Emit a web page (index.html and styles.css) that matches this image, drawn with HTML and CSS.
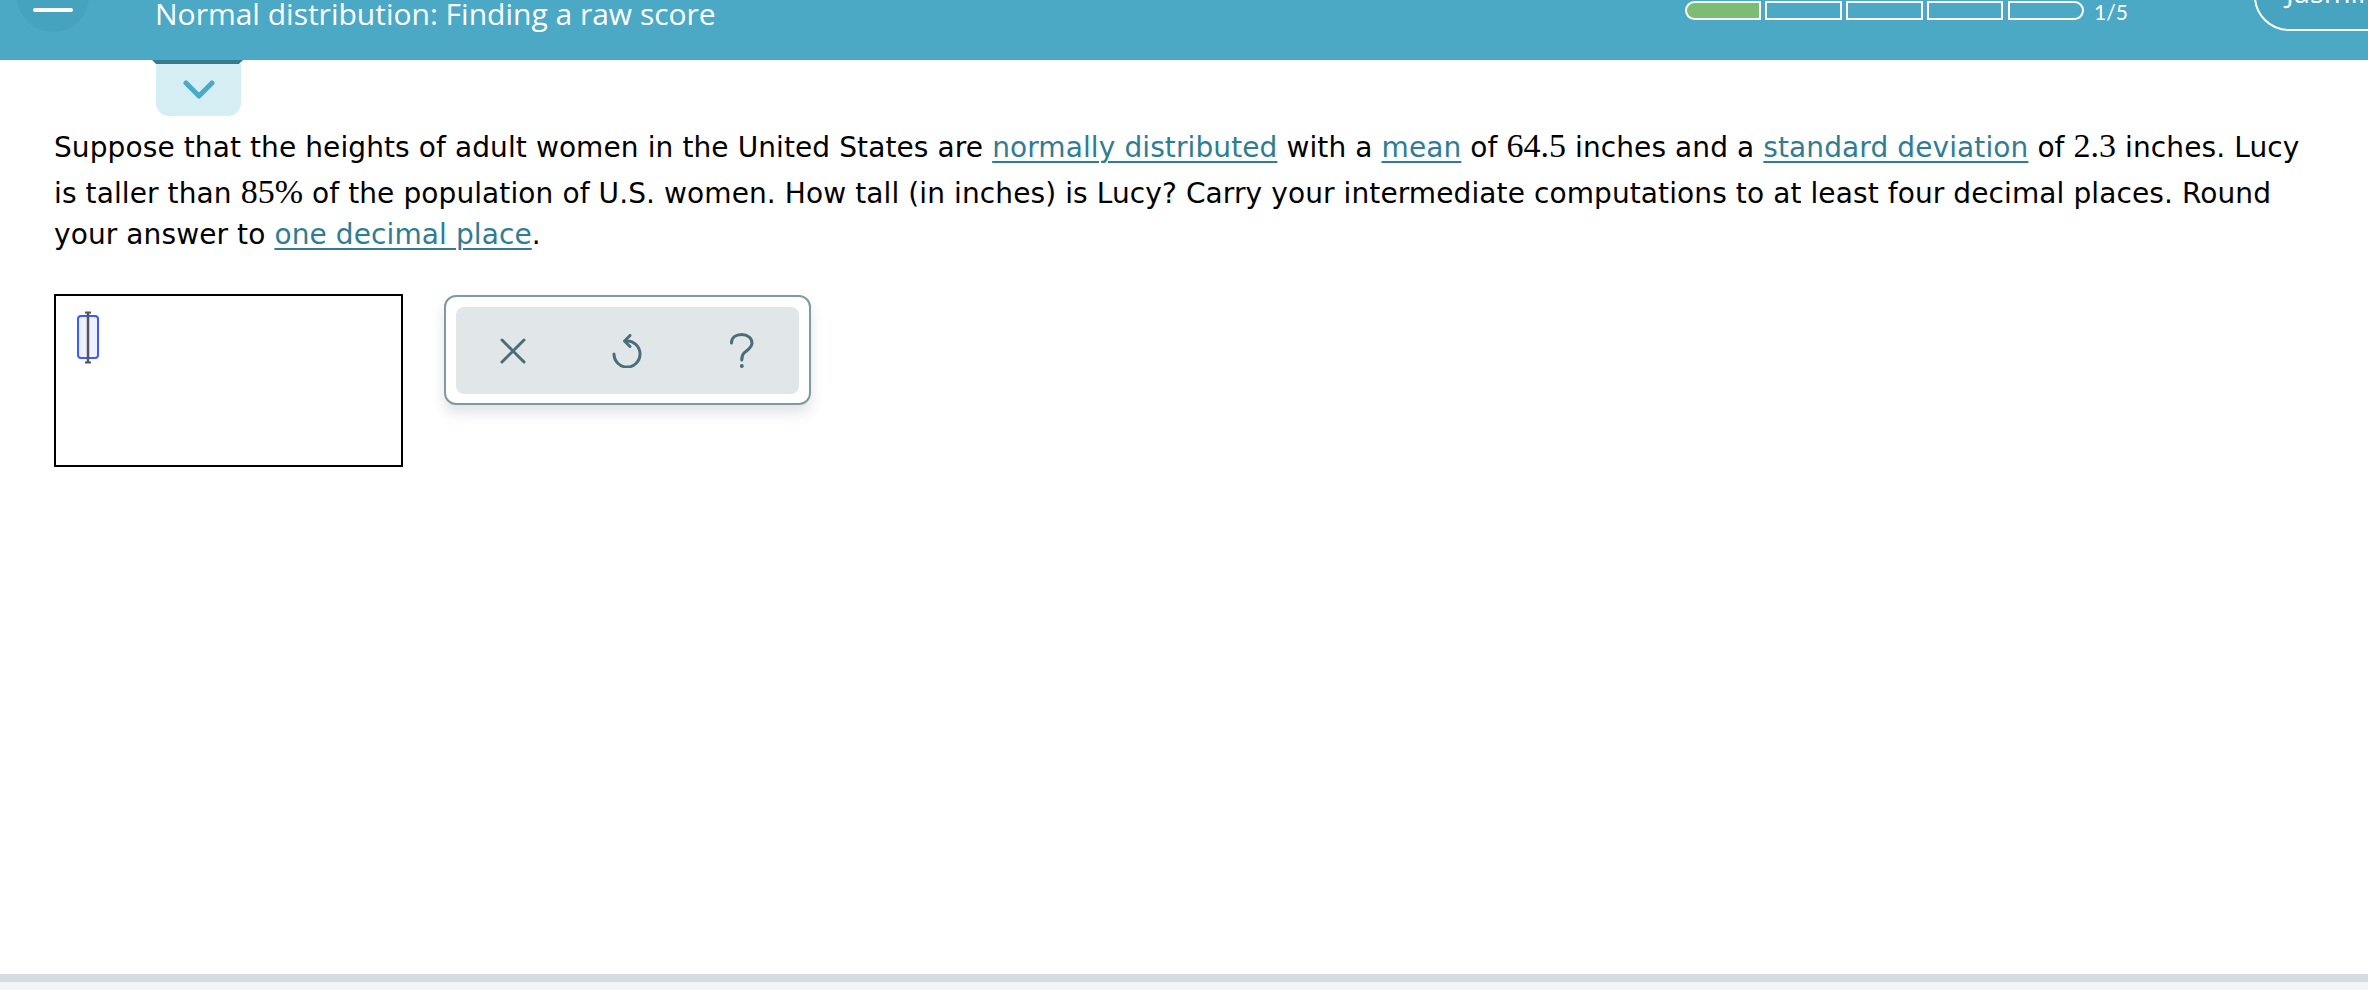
FILE: index.html
```html
<!DOCTYPE html>
<html lang="en">
<head>
<meta charset="utf-8">
<title>Normal distribution: Finding a raw score</title>
<link rel="stylesheet" href="styles.css">
</head>
<body>
<div class="page">
  <header class="topbar">
    <div class="menu-btn"><span class="menu-line"></span></div>
    <div class="title">Normal distribution: Finding a raw score</div>
    <div class="progress">
      <span class="seg seg-first seg-done"></span>
      <span class="seg"></span>
      <span class="seg"></span>
      <span class="seg"></span>
      <span class="seg seg-last"></span>
    </div>
    <div class="count">1/5</div>
    <div class="account">Jasmine</div>
  </header>

  <div class="tab">
    <div class="tab-edge"></div>
    <div class="tab-body">
      <svg class="chev" width="32" height="20" viewBox="0 0 32 20"><path d="M3 3 L16 16 L29 3" fill="none" stroke="#4aa9c6" stroke-width="5" stroke-linecap="round" stroke-linejoin="round"/></svg>
    </div>
  </div>

  <main class="content">
    <p class="problem">Suppose that the heights of adult women in the United States are <a class="link">normally distributed</a> with a <a class="link">mean</a> of <span class="math">64.5</span> inches and a <a class="link">standard deviation</a> of <span class="math">2.3</span> inches. Lucy is taller than <span class="math">85%</span> of the population of U.S. women. How tall (in inches) is Lucy? Carry your intermediate computations to at least four decimal places. Round your answer to <a class="link">one decimal place</a>.</p>

    <div class="answer-row">
      <div class="answer-box">
        <svg class="cursor" width="26" height="54" viewBox="0 0 26 54">
          <rect x="3" y="5" width="20" height="42" rx="3" fill="#eef0ff" stroke="#3d5afe" stroke-width="2"/>
          <path d="M13 2 V51" stroke="#555" stroke-width="2.5"/>
          <path d="M10 1.5 H16 M10 51.5 H16" stroke="#555" stroke-width="1.8"/>
        </svg>
      </div>
      <div class="toolbar">
        <div class="tools">
          <div class="tool">
            <svg width="26" height="26" viewBox="0 0 26 26"><path d="M2 2 L24 24 M24 2 L2 24" stroke="#4a6e79" stroke-width="3" stroke-linecap="round"/></svg>
          </div>
          <div class="tool">
            <svg width="32" height="34" viewBox="0 0 32 34"><path d="M16 7 A13 13 0 1 1 3 20" fill="none" stroke="#4a6e79" stroke-width="3" stroke-linecap="round"/><path d="M19 1.5 L13.5 7 L19 12.5" fill="none" stroke="#4a6e79" stroke-width="3" stroke-linecap="round" stroke-linejoin="round"/></svg>
          </div>
          <div class="tool">
            <svg width="26" height="36" viewBox="0 0 26 36"><path d="M2.5 10 C2.5 4.5 7 1.5 12.5 1.5 C18.5 1.5 23 5 23 10 C23 15 18 17 15 20 C13.3 21.7 12.8 23.5 12.8 27" fill="none" stroke="#4a6e79" stroke-width="3" stroke-linecap="round"/><circle cx="12.8" cy="33" r="2" fill="#4a6e79"/></svg>
          </div>
        </div>
      </div>
    </div>
  </main>

  <footer class="bottom-band"></footer>
</div>
</body>
</html>
```

FILE: styles.css
```css
html, body {
  margin: 0;
  padding: 0;
  background: #ffffff;
}

.page {
  width: 2368px;
  height: 990px;
  overflow: hidden;
  display: flex;
  flex-direction: column;
  font-family: "DejaVu Sans", Verdana, sans-serif;
  color: #000;
}

.topbar {
  height: 60px;
  flex-shrink: 0;
  background: #4ba9c6;
  display: flex;
  align-items: flex-start;
  padding-left: 17px;
  overflow: hidden;
  font-family: "Open Sans", Lato, sans-serif;
  color: #fff;
}

.menu-btn {
  width: 72px;
  height: 72px;
  margin-top: -40px;
  border-radius: 50%;
  background: #45a3c0;
  flex-shrink: 0;
  display: flex;
  justify-content: center;
  padding-top: 48px;
  box-sizing: border-box;
}

.menu-line {
  display: block;
  width: 40px;
  height: 4px;
  border-radius: 2px;
  background: #fff;
}

.title {
  margin-left: 66px;
  font-size: 30px;
  line-height: 30px;
  margin-top: -1px;
  white-space: nowrap;
}

.progress {
  margin-left: auto;
  margin-top: 1px;
  display: flex;
  gap: 4.25px;
}

.seg {
  width: 76.5px;
  height: 19px;
  box-sizing: border-box;
  border: 2px solid #fff;
}

.seg-done {
  background: #7dbd73;
}

.seg-first {
  border-radius: 10px 0 0 10px;
}

.seg-last {
  border-radius: 0 10px 10px 0;
}

.count {
  width: 160px;
  margin-left: 10px;
  font-family: Lato, sans-serif;
  font-size: 21px;
  line-height: 21px;
  margin-top: 1px;
  flex-shrink: 0;
}

.account {
  width: 200px;
  height: 70px;
  margin-top: -39px;
  margin-right: -86px;
  flex-shrink: 0;
  box-sizing: border-box;
  border: 2px solid #fff;
  border-radius: 36px;
  background: #47a4c1;
  padding: 14px 0 0 30px;
  font-size: 29px;
  line-height: 29px;
}

.tab {
  margin-left: 152px;
  width: 91px;
  flex-shrink: 0;
}

.tab-edge {
  height: 4px;
  background: #367a8c;
  clip-path: polygon(0 0, 100% 0, 95.5% 100%, 4.5% 100%);
}

.tab-body {
  margin-left: 4px;
  width: 85px;
  height: 52px;
  background: #d5eef4;
  border-radius: 0 0 13px 13px;
  display: flex;
  justify-content: center;
  align-items: flex-start;
  padding-top: 16px;
  box-sizing: border-box;
}

.content {
  flex: 1;
  padding-left: 54px;
}

.problem {
  margin: 6px 0 0 0;
  width: 2262px;
  font-size: 28px;
  line-height: 41px;
  letter-spacing: 0.1px;
}

.link {
  color: #2f7d93;
  text-decoration: underline;
  text-decoration-thickness: 2px;
  text-underline-offset: 4px;
}

.math {
  display: inline-block;
  padding-top: 3px;
  font-family: "Liberation Serif", "Times New Roman", serif;
  font-size: 34px;
  line-height: 41px;
  letter-spacing: 0;
}

.answer-row {
  display: flex;
  align-items: flex-start;
  margin-top: 39px;
}

.answer-box {
  width: 349px;
  height: 173px;
  box-sizing: border-box;
  border: 2px solid #000;
  padding: 15px 0 0 19px;
}

.cursor {
  display: block;
}

.toolbar {
  margin-left: 41px;
  margin-top: 1px;
  width: 367px;
  height: 110px;
  box-sizing: border-box;
  border: 2px solid #809aa3;
  border-radius: 12px;
  background: #fff;
  padding: 10px;
  box-shadow: 0 8px 14px rgba(40, 60, 70, 0.14);
}

.tools {
  height: 87px;
  background: #e1e6e9;
  border-radius: 8px;
  display: flex;
}

.tool {
  flex: 1;
  display: flex;
  justify-content: center;
  align-items: center;
}

.bottom-band {
  height: 16px;
  flex-shrink: 0;
  background: linear-gradient(#d5dbdf 0, #d5dbdf 8px, #f2f4f5 8px, #f2f4f5 16px);
}
```
